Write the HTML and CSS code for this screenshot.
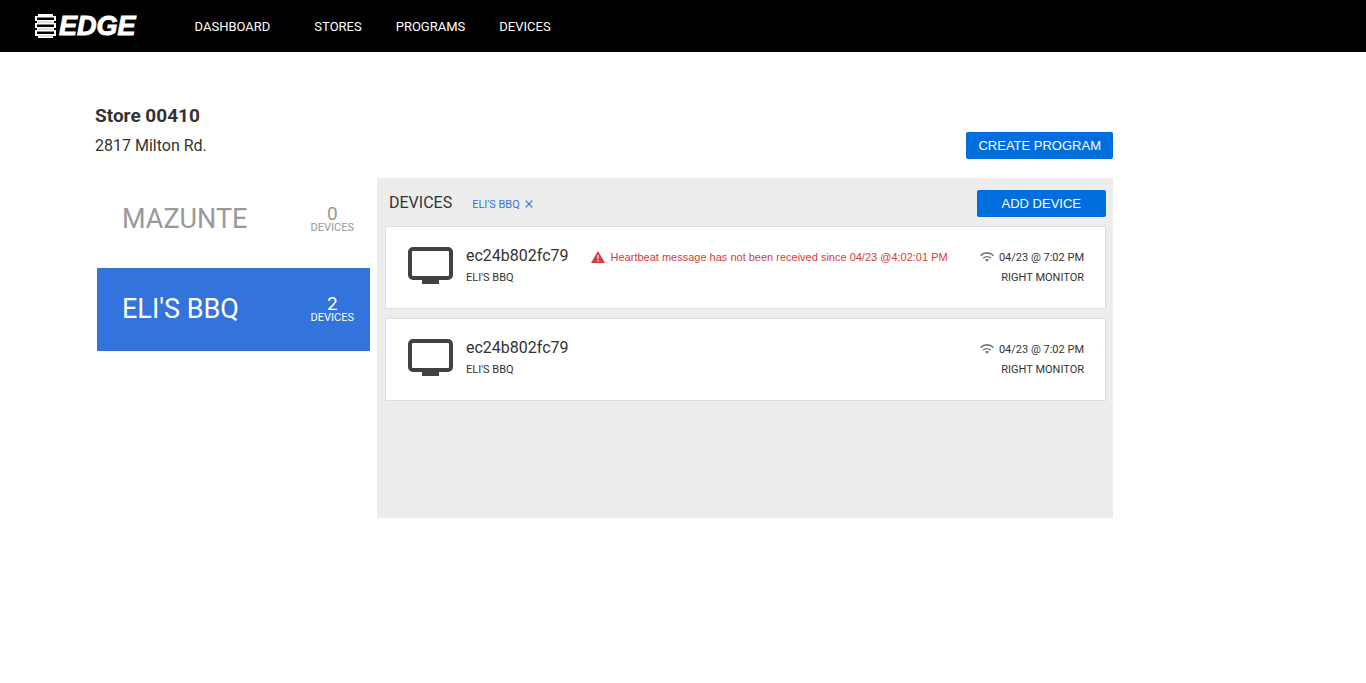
FILE: index.html
```
<!DOCTYPE html>
<html lang="en">
<head>
  <meta charset="UTF-8">
  <meta name="viewport" content="width=device-width, initial-scale=1.0">
  <title>Edge - Store 00410</title>
  <link rel="stylesheet" href="styles.css">
</head>
<body>
  <svg width="0" height="0" class="sprite" aria-hidden="true">
    <symbol id="icon-monitor" viewBox="0 0 45 38">
      <rect x="2" y="2" width="41" height="29" rx="3" fill="none" stroke="#424242" stroke-width="4"/>
      <path d="M14 32h17v4.500q0 .5-.5.5h-16q-.5 0-.5-.5z" fill="#424242"/>
    </symbol>
    <symbol id="icon-wifi" viewBox="0 0 14 10">
      <path d="M.6 3.600C4.200 0 9.800 0 13.400 3.600M3.200 6.200c2.200-2 5.400-2 7.600 0" fill="none" stroke="#757575" stroke-width="1.600"/>
      <path d="M5 7.800c1.200-1 2.800-1 4 0l-2 2z" fill="#757575"/>
    </symbol>
  </svg>

  <header class="topbar">
    <a href="#" class="logo">
      <svg width="21" height="26" viewBox="0 0 21 26" aria-hidden="true">
        <path d="M3 1h15v2h3v5h-2v2h2v5h-2v2h2v6h-3v2H3v-2H0v-6h2v-2H0v-5h2V8H0V3h3z" fill="#fff"/>
        <path d="M2 4.500h17v2.500H2zM2 11.500h17v2.500H2zM2 18.500h17v2.500H2z" fill="#000"/>
        <path d="M3 9h15M3 16h15M3 23h15" stroke="#777" stroke-width=".5"/>
      </svg>
      <span class="logo-text">EDGE</span>
    </a>
    <nav class="nav">
      <a href="#" class="nav-home">DASHBOARD</a>
      <a href="#">STORES</a>
      <a href="#">PROGRAMS</a>
      <a href="#">DEVICES</a>
    </nav>
  </header>

  <main class="page">
    <div class="store-header">
      <div>
        <h1>Store 00410</h1>
        <p class="address">2817 Milton Rd.</p>
      </div>
      <button class="btn" type="button">CREATE PROGRAM</button>
    </div>

    <div class="content">
      <div class="tenants">
        <button class="tenant" type="button">
          <span class="tenant-name">MAZUNTE</span>
          <span class="tenant-count"><span class="count">0</span>DEVICES</span>
        </button>
        <button class="tenant active" type="button">
          <span class="tenant-name">ELI'S BBQ</span>
          <span class="tenant-count"><span class="count">2</span>DEVICES</span>
        </button>
      </div>

      <section class="panel">
        <div class="panel-header">
          <h2>DEVICES</h2>
          <button class="filter" type="button">
            ELI'S BBQ
            <svg width="8" height="8" viewBox="0 0 8 8" stroke="#3273dc" stroke-width="1.200" aria-hidden="true"><path d="M.7.7l6.600 6.600M7.300.7L.7 7.300"/></svg>
          </button>
          <button class="btn btn-add" type="button">ADD DEVICE</button>
        </div>

        <article class="device">
          <svg width="45" height="38" aria-hidden="true"><use href="#icon-monitor"/></svg>
          <div class="device-info">
            <h3>ec24b802fc79</h3>
            <p>ELI'S BBQ</p>
          </div>
          <p class="alert">
            <svg width="14" height="12" viewBox="0 0 14 12" aria-hidden="true">
              <path d="M7 0l7 12H0z" fill="#d93a3d"/>
              <path d="M7 4v4M7 9v1.500" stroke="#fff" stroke-width="1.200"/>
            </svg>
            Heartbeat message has not been received since 04/23 @4:02:01 PM
          </p>
          <div class="status">
            <p><svg width="14" height="10" aria-hidden="true"><use href="#icon-wifi"/></svg>04/23 @ 7:02 PM</p>
            <p>RIGHT MONITOR</p>
          </div>
        </article>

        <article class="device">
          <svg width="45" height="38" aria-hidden="true"><use href="#icon-monitor"/></svg>
          <div class="device-info">
            <h3>ec24b802fc79</h3>
            <p>ELI'S BBQ</p>
          </div>
          <div class="status">
            <p><svg width="14" height="10" aria-hidden="true"><use href="#icon-wifi"/></svg>04/23 @ 7:02 PM</p>
            <p>RIGHT MONITOR</p>
          </div>
        </article>
      </section>
    </div>
  </main>
</body>
</html>
```
FILE: styles.css
```
* { margin: 0; padding: 0; box-sizing: border-box; }
body {
  background: #fff;
  font-family: Roboto, sans-serif;
  color: #333;
}
button {
  border: none;
  background: none;
  font-family: inherit;
  cursor: pointer;
}
a {
  color: inherit;
  text-decoration: none;
}
.sprite {
  display: block;
}
.topbar {
  display: flex;
  align-items: center;
  height: 52px;
  padding: 0 35px;
  background: #000;
  color: #fff;
}
.logo {
  display: flex;
  align-items: center;
  gap: 3px;
}
.logo-text {
  font: italic bold 27px/28px "Liberation Sans", Arial, sans-serif;
  -webkit-text-stroke: 1px #fff;
}
.nav {
  display: flex;
  gap: 34px;
  margin-left: 59px;
  font-size: 13px;
}
.nav-home {
  margin-right: 10px;
}
.page {
  padding: 50px 253px 40px 95px;
}
.store-header {
  display: flex;
  justify-content: space-between;
  align-items: flex-end;
  height: 57px;
}
h1 {
  font-size: 19px;
  line-height: 26px;
  font-weight: 700;
}
.address {
  margin-top: 4px;
  font-size: 16px;
  line-height: 26px;
}
.btn {
  height: 27px;
  padding: 0 12px;
  border-radius: 2px;
  background: #006edc;
  color: #fff;
  font-family: "Liberation Sans", Arial, sans-serif;
  font-size: 13px;
}
.content {
  display: flex;
  gap: 7px;
  margin-top: 19px;
}
.tenants {
  width: 275px;
  padding-left: 2px;
}
.tenant {
  display: flex;
  justify-content: space-between;
  align-items: center;
  width: 100%;
  height: 83px;
  margin-bottom: 7px;
  padding: 0 16px 2px 25px;
  color: #999;
}
.tenant.active {
  background: #3273dc;
  color: #fff;
}
.tenant-name {
  font-size: 27px;
}
.tenant-count {
  font-size: 11px;
  line-height: 11px;
  text-align: center;
}
.count {
  display: block;
  font-size: 19px;
  line-height: 17px;
}
.panel {
  flex: 1;
  min-height: 340px;
  padding: 12px 7px 12px 8px;
  background: #ededed;
}
.panel-header {
  display: flex;
  align-items: center;
  margin-bottom: 9px;
  padding-left: 4px;
}
h2, h3 {
  font-size: 16px;
  font-weight: 400;
}
h2 {
  padding-bottom: 2px;
}
.filter {
  display: flex;
  align-items: center;
  gap: 5px;
  margin-left: 20px;
  padding-top: 1px;
  color: #3273dc;
  font-size: 11px;
}
.btn-add {
  margin-left: auto;
  padding: 0 25px;
}
.device {
  display: flex;
  align-items: flex-start;
  height: 83px;
  margin-bottom: 9px;
  padding: 20px 21px 0 22px;
  border: 1px solid #ddd;
  background: #fff;
  font-size: 11px;
  line-height: 20px;
}
.device-info {
  margin-left: 13px;
}
h3 {
  margin-bottom: 3px;
  line-height: 18px;
}
.alert {
  display: flex;
  align-items: center;
  gap: 6px;
  margin-left: 22px;
  color: #d93a3d;
  font-family: "Liberation Sans", Arial, sans-serif;
}
.status {
  margin-left: auto;
  padding-top: 1px;
  text-align: right;
}
.status svg {
  margin-right: 5px;
  vertical-align: -1px;
}
```
